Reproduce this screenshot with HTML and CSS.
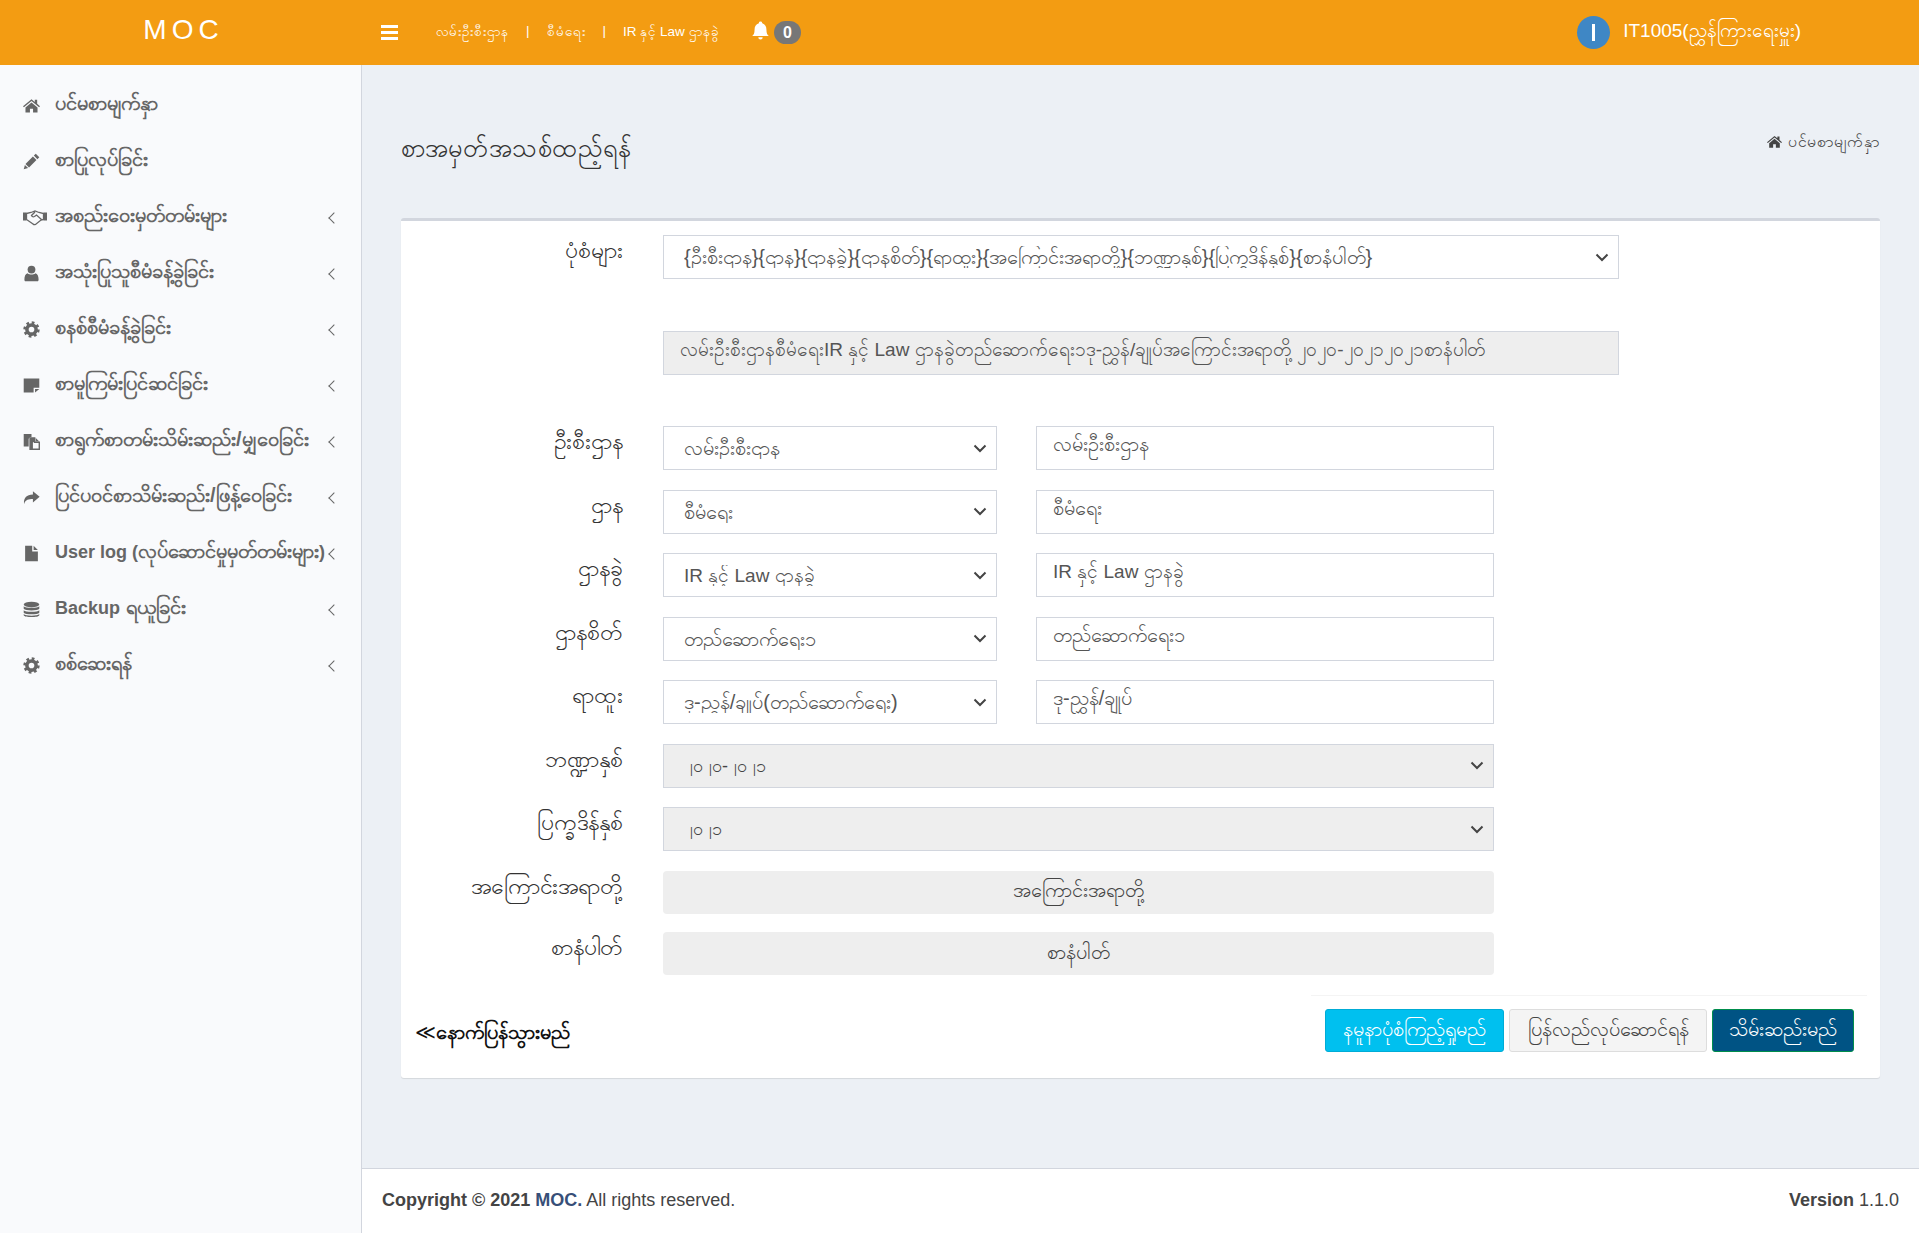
FILE: index.html
```html
<!DOCTYPE html>
<html lang="my">
<head>
    <meta charset="UTF-8">
    <meta name="viewport" content="width=device-width, initial-scale=1.0">
    <title>MOC</title>
    <link rel="stylesheet" href="styles.css">
</head>
<body>
    <svg class="icon-defs" width="0" height="0">
        <symbol id="i-home" viewBox="0 0 24 20"><path d="M12 1 0 11l1.300 1.500L12 3.600l10.700 8.900L24 11l-4-3.300V2h-3.400v2.900zM3.500 12.800V20h6.300v-5.500h4.400V20h6.300v-7.200L12 5.600z"/></symbol>
        <symbol id="i-pencil" viewBox="0 0 24 24"><path d="M18 1l5 5-2.700 2.700-5-5zM14 5l5 5L8.500 20.500l-5-5zM2.700 16.800l4.500 4.500L1 23z"/></symbol>
        <symbol id="i-handshake" viewBox="0 0 24 16"><path d="M0 3h3.500v8H0zM20.500 3H24v8h-3.500z"/><path fill="none" stroke="currentColor" stroke-width="1.300" d="M3.500 4 8 3l4-1.500L16 3l4.500 1v6l-2.500.5-5.500 4.500q-1.500.5-2.500-.5L3.500 10zM12 2.500 8.500 6q1 2 3 1l2-1.500 5.500 5"/></symbol>
        <symbol id="i-user" viewBox="0 0 24 24"><circle cx="12" cy="6.500" r="5.500"/><path d="M3.500 23C2.500 23 2 22 2 20.500 2 15.500 3.500 12 6.500 11.500 8 13 10 13.500 12 13.500s4-.5 5.500-2c3 .5 4.500 4 4.500 9 0 1.500-.5 2.500-1.500 2.500z"/></symbol>
        <symbol id="i-cog" viewBox="0 0 24 24"><circle cx="12" cy="12" r="6.500" fill="none" stroke="currentColor" stroke-width="5"/><circle cx="12" cy="12" r="9.800" fill="none" stroke="currentColor" stroke-width="3.500" stroke-dasharray="3.850 3.850"/></symbol>
        <symbol id="i-note" viewBox="0 0 24 24"><path d="M1 2h22v13h-8v7H1zM17 17h6l-6 5z"/></symbol>
        <symbol id="i-files" viewBox="0 0 24 24"><path d="M1 1.500h11V6h-2L8 8v11H1z"/><path fill="none" stroke="currentColor" stroke-width="2" d="M10 7h6.500v6H23v10H10z"/><path d="M18 7l5 5h-5z"/><path d="M10 7h6v6h-6zM10 13h4v10h-4z"/></symbol>
        <symbol id="i-share" viewBox="0 0 24 24"><path d="M14 3l9.500 8-9.500 8v-4.800C8 14.200 3.500 15 1.500 21 .5 13 5 8 14 7.800z"/></symbol>
        <symbol id="i-file" viewBox="0 0 24 24"><path d="M3 1h10v8h8v14H3zM15 1l6 6h-6z"/></symbol>
        <symbol id="i-database" viewBox="0 0 24 24"><ellipse cx="12" cy="5" rx="11" ry="4"/><path d="M1 7.500C3 10.500 21 10.500 23 7.500v3.500C21 14 3 14 1 11zM1 13C3 16 21 16 23 13v3.500C21 19.500 3 19.500 1 16.500zM1 18.500C3 21.500 21 21.500 23 18.500V20c-1 3.500-21 3.500-22 0z"/></symbol>
        <symbol id="i-bell" viewBox="0 0 24 24"><path d="M12 .5a2 2 0 0 1 2 2.200c4 1 5.500 4.300 5.500 8.300 0 4.500 1 6 3 8H1.500c2-2 3-3.500 3-8 0-4 1.500-7.300 5.500-8.300A2 2 0 0 1 12 .5zM9.200 20.500h5.600a2.800 2.800 0 0 1-5.600 0z"/></symbol>
    </svg>

    <header class="topbar">
        <div class="logo">MOC</div>
        <div class="hamburger"><span></span><span></span><span></span></div>
        <nav class="top-links">
            <span>လမ်းဦးစီးဌာန</span>
            <span class="sep">|</span>
            <span>စီမံရေး</span>
            <span class="sep">|</span>
            <span>IR နှင့် Law ဌာနခွဲ</span>
        </nav>
        <div class="notify">
            <svg class="bell"><use href="#i-bell"/></svg>
            <span class="badge">0</span>
        </div>
        <div class="user">
            <span class="avatar"><span></span></span>
            <span class="user-name">IT1005(ညွှန်ကြားရေးမှူး)</span>
        </div>
    </header>

    <div class="wrapper">
        <aside class="sidebar">
            <a class="side-item"><svg><use href="#i-home"/></svg><span>ပင်မစာမျက်နှာ</span></a>
            <a class="side-item"><svg><use href="#i-pencil"/></svg><span>စာပြုလုပ်ခြင်း</span></a>
            <a class="side-item has-sub"><svg class="wide"><use href="#i-handshake"/></svg><span>အစည်းဝေးမှတ်တမ်းများ</span></a>
            <a class="side-item has-sub"><svg><use href="#i-user"/></svg><span>အသုံးပြုသူစီမံခန့်ခွဲခြင်း</span></a>
            <a class="side-item has-sub"><svg><use href="#i-cog"/></svg><span>စနစ်စီမံခန့်ခွဲခြင်း</span></a>
            <a class="side-item has-sub"><svg><use href="#i-note"/></svg><span>စာမူကြမ်းပြင်ဆင်ခြင်း</span></a>
            <a class="side-item has-sub"><svg><use href="#i-files"/></svg><span>စာရွက်စာတမ်းသိမ်းဆည်း/မျှဝေခြင်း</span></a>
            <a class="side-item has-sub"><svg><use href="#i-share"/></svg><span>ပြင်ပဝင်စာသိမ်းဆည်း/ဖြန့်ဝေခြင်း</span></a>
            <a class="side-item has-sub"><svg><use href="#i-file"/></svg><span><span class="latin">User log (</span>လုပ်ဆောင်မှုမှတ်တမ်းများ<span class="latin">)</span></span></a>
            <a class="side-item has-sub"><svg><use href="#i-database"/></svg><span><span class="latin">Backup</span> ရယူခြင်း</span></a>
            <a class="side-item has-sub"><svg><use href="#i-cog"/></svg><span>စစ်ဆေးရန်</span></a>
        </aside>

        <div class="main">
            <section class="content">
                <div class="content-head">
                    <h1>စာအမှတ်အသစ်ထည့်ရန်</h1>
                    <div class="crumb"><svg><use href="#i-home"/></svg>ပင်မစာမျက်နှာ</div>
                </div>

                <div class="box">
                    <form class="letter-form">
                        <div class="row row-gap-big">
                            <label>ပုံစံများ</label>
                            <select class="field f-wide"><option>{ဦးစီးဌာန}{ဌာန}{ဌာနခွဲ}{ဌာနစိတ်}{ရာထူး}{အကြောင်းအရာတို့}{ဘဏ္ဍာနှစ်}{ပြက္ခဒိန်နှစ်}{စာနံပါတ်}</option></select>
                        </div>
                        <div class="row row-gap-big">
                            <label></label>
                            <input class="field f-wide grey mixed" readonly value="လမ်းဦးစီးဌာနစီမံရေးIR နှင့် Law ဌာနခွဲတည်ဆောက်ရေး၁ဒု-ညွှန်/ချုပ်အကြောင်းအရာတို့၂၀၂၀-၂၀၂၁၂၀၂၁စာနံပါတ်">
                        </div>
                        <div class="row">
                            <label>ဦးစီးဌာန</label>
                            <select class="field f-half"><option>လမ်းဦးစီးဌာန</option></select>
                            <input class="field f-rest" readonly value="လမ်းဦးစီးဌာန">
                        </div>
                        <div class="row">
                            <label>ဌာန</label>
                            <select class="field f-half"><option>စီမံရေး</option></select>
                            <input class="field f-rest" readonly value="စီမံရေး">
                        </div>
                        <div class="row">
                            <label>ဌာနခွဲ</label>
                            <select class="field f-half mixed"><option>IR နှင့် Law ဌာနခွဲ</option></select>
                            <input class="field f-rest mixed" readonly value="IR နှင့် Law ဌာနခွဲ">
                        </div>
                        <div class="row">
                            <label>ဌာနစိတ်</label>
                            <select class="field f-half"><option>တည်ဆောက်ရေး၁</option></select>
                            <input class="field f-rest" readonly value="တည်ဆောက်ရေး၁">
                        </div>
                        <div class="row">
                            <label>ရာထူး</label>
                            <select class="field f-half"><option>ဒု-ညွှန်/ချုပ်(တည်ဆောက်ရေး)</option></select>
                            <input class="field f-rest" readonly value="ဒု-ညွှန်/ချုပ်">
                        </div>
                        <div class="row">
                            <label>ဘဏ္ဍာနှစ်</label>
                            <select class="field f-full grey digits" disabled><option>၂၀၂၀-၂၀၂၁</option></select>
                        </div>
                        <div class="row">
                            <label>ပြက္ခဒိန်နှစ်</label>
                            <select class="field f-full grey digits" disabled><option>၂၀၂၁</option></select>
                        </div>
                        <div class="row row-btn">
                            <label>အကြောင်းအရာတို့</label>
                            <button type="button" class="grey-btn">အကြောင်းအရာတို့</button>
                        </div>
                        <div class="row row-btn row-last">
                            <label>စာနံပါတ်</label>
                            <button type="button" class="grey-btn">စာနံပါတ်</button>
                        </div>
                    </form>

                    <div class="box-foot">
                        <a class="back-link"><span class="back-arrow">≪</span>နောက်ပြန်သွားမည်</a>
                        <div class="actions">
                            <button type="button" class="btn btn-info">နမူနာပုံစံကြည့်ရှုမည်</button>
                            <button type="button" class="btn btn-default">ပြန်လည်လုပ်ဆောင်ရန်</button>
                            <button type="button" class="btn btn-save">သိမ်းဆည်းမည်</button>
                        </div>
                    </div>
                </div>
            </section>

            <footer class="footer">
                <div><b>Copyright © 2021 <span class="brand">MOC.</span></b> All rights reserved.</div>
                <div><b>Version</b> 1.1.0</div>
            </footer>
        </div>
    </div>
</body>
</html>
```
FILE: styles.css
```css
* {
    box-sizing: border-box;
}
body {
    margin: 0;
    height: 100vh;
    display: flex;
    flex-direction: column;
    overflow: hidden;
    font-family: "Liberation Sans", sans-serif;
    color: #333;
    background: #ecf0f5;
}
.icon-defs {
    position: absolute;
}
svg {
    fill: currentColor;
}

/* top bar */
.topbar {
    flex: 0 0 65px;
    display: flex;
    align-items: center;
    background: #f39c12;
    color: #fff;
}
.logo {
    width: 361px;
    padding-left: 6px;
    text-align: center;
    font-size: 28px;
    letter-spacing: 5px;
    margin-top: -5px;
}
.hamburger {
    width: 17px;
    margin-left: 20px;
    display: flex;
    flex-direction: column;
    gap: 3px;
}
.hamburger span {
    height: 3px;
    background: #fff;
}
.top-links {
    width: 277px;
    display: flex;
    gap: 17px;
    margin-left: 38px;
    font-size: 13.5px;
    white-space: nowrap;
}
.notify {
    display: flex;
    align-items: center;
    gap: 4px;
    margin-left: 38px;
}
.bell {
    width: 19px;
    height: 19px;
    margin-top: -5px;
}
.badge {
    width: 27px;
    height: 23px;
    border-radius: 12px;
    background: #777;
    text-align: center;
    font-size: 16px;
    font-weight: bold;
    line-height: 23px;
}
.user {
    margin-left: auto;
    margin-right: 118px;
    display: flex;
    align-items: center;
    gap: 13px;
}
.avatar {
    width: 33px;
    height: 33px;
    border-radius: 50%;
    background: #3f87c5;
    display: flex;
    align-items: center;
    justify-content: center;
}
.avatar span {
    width: 3px;
    height: 17px;
    background: #fff;
}
.user-name {
    font-size: 19px;
    margin-top: -2px;
}

/* sidebar */
.wrapper {
    flex: 1;
    display: flex;
    min-height: 0;
}
.sidebar {
    flex: 0 0 362px;
    padding-top: 12px;
    background: #f9fafc;
    border-right: 1px solid #d2d6de;
}
.side-item {
    position: relative;
    height: 56px;
    display: flex;
    align-items: center;
    padding-left: 23px;
    color: #666;
    font-size: 20px;
    font-weight: bold;
    white-space: nowrap;
}
.side-item .latin {
    font-size: 18px;
}
.side-item svg {
    flex: 0 0 17px;
    width: 17px;
    height: 17px;
    margin-right: 15px;
}
.side-item svg.wide {
    flex-basis: 24px;
    width: 24px;
    margin-right: 8px;
}
.has-sub::after {
    content: "";
    position: absolute;
    right: 23px;
    top: 25px;
    width: 7px;
    height: 7px;
    border-left: 1px solid #666;
    border-bottom: 1px solid #666;
    transform: rotate(45deg);
}

/* page */
.main {
    flex: 1;
    min-width: 0;
    display: flex;
    flex-direction: column;
}
.content {
    flex: 1;
    padding: 0 39px;
}
.content-head {
    height: 153px;
    display: flex;
    justify-content: space-between;
    padding-top: 58px;
}
.content-head h1 {
    margin: 0;
    font-size: 25.5px;
    font-weight: 400;
    line-height: 50px;
}
.crumb {
    font-size: 16px;
    line-height: 30px;
    margin-top: 4px;
    color: #444;
    display: flex;
    align-items: flex-start;
    gap: 6px;
}
.crumb svg {
    width: 15px;
    height: 15px;
    margin-top: 7px;
}
.box {
    height: 860px;
    background: #fff;
    border-top: 3px solid #d2d6de;
    border-radius: 3px;
    box-shadow: 0 1px 1px rgba(0, 0, 0, 0.1);
}

/* form */
.letter-form {
    display: flex;
    flex-direction: column;
    gap: 19.5px;
    padding-top: 14px;
}
.row {
    display: flex;
    height: 44px;
    align-items: flex-start;
}
.row-gap-big {
    margin-bottom: 32px;
}
.row-btn {
    height: 43px;
}
.row-last {
    margin-top: -1px;
}
.row label {
    width: 222px;
    margin-right: 40px;
    text-align: right;
    font-size: 23px;
    line-height: 30px;
    color: #333;
}
.field {
    height: 44px;
    border: 1px solid #d2d6de;
    background: #fff;
    color: #555;
    font: 20px "Liberation Sans", sans-serif;
    padding: 0 16px;
    outline: none;
}
input.field {
    padding-bottom: 4px;
}
select.field {
    appearance: none;
    padding-left: 20px;
    background: #fff url("data:image/svg+xml,%3Csvg xmlns='http://www.w3.org/2000/svg' width='14' height='9'%3E%3Cpath d='M1.500 1.500 7 7l5.500-5.500' fill='none' stroke='%23444' stroke-width='2'/%3E%3C/svg%3E") no-repeat right 9px center;
}
.field.mixed {
    font-size: 19px;
}
.field.digits {
    font-size: 18px;
    color: #444;
}
.f-wide {
    width: 956px;
}
.f-half {
    width: 334px;
    margin-right: 39px;
}
.f-rest {
    width: 458px;
}
.f-full {
    width: 831px;
}
input.field.grey {
    background: #eee;
}
select.field.grey {
    background-color: #eee;
    opacity: 1;
}
.grey-btn {
    width: 831px;
    height: 43px;
    border: 0;
    border-radius: 4px;
    background: #eee;
    color: #444;
    font: 20px "Liberation Sans", sans-serif;
}

/* bottom of the box */
.box-foot {
    position: relative;
    margin-top: 20px;
    display: flex;
    justify-content: flex-end;
    padding: 14px 26px 0 0;
}
.box-foot::before {
    content: "";
    position: absolute;
    top: 0;
    left: 910px;
    right: 13px;
    border-top: 1px solid #f4f4f4;
}
.back-link {
    position: absolute;
    left: 14px;
    top: 24px;
    font-size: 20px;
    font-weight: bold;
    color: #111;
}
.back-arrow {
    font-weight: normal;
}
.actions {
    display: flex;
    gap: 5px;
}
.btn {
    height: 43px;
    padding: 0 14px;
    border-radius: 3px;
    border: 1px solid transparent;
    font: 20px "Liberation Sans", sans-serif;
}
.btn-info {
    width: 179px;
    background: #00c0ef;
    border-color: #00acd6;
    color: #fff;
}
.btn-default {
    width: 198px;
    background: #f4f4f4;
    border-color: #ddd;
    color: #444;
}
.btn-save {
    width: 142px;
    background: #005384;
    border-color: #008d4c;
    color: #fff;
}

/* footer */
.footer {
    flex: 0 0 65px;
    display: flex;
    justify-content: space-between;
    align-items: center;
    padding: 0 20px 2px;
    background: #fff;
    border-top: 1px solid #d2d6de;
    font-size: 18px;
    color: #444;
}
.brand {
    color: #374f78;
}
```
